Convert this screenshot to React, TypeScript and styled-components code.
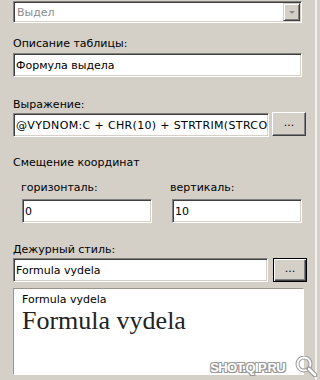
import React from "react";
import styled, { createGlobalStyle, css } from "styled-components";

const Global = createGlobalStyle`
  html, body { margin: 0; padding: 0; background: #d4d0c8; }
  body {
    font-family: "DejaVu Sans", Tahoma, Verdana, sans-serif;
    font-size: 11px;
    color: #000;
  }
`;

const sunken = css`
  box-sizing: border-box;
  border: 1px solid;
  border-color: #808080 #ffffff #ffffff #808080;
  box-shadow: inset 1px 1px 0 #404040, inset -1px -1px 0 #d4d0c8;
  background: #fff;
`;

const Page = styled.div`
  position: relative;
  width: 320px;
  height: 380px;
  overflow: hidden;
  background: #d4d0c8;
  display: flex;
`;

const Panel = styled.div`
  box-sizing: border-box;
  width: 317px;
  flex: none;
  border-right: 2px solid #f2f1ed;
  display: flex;
  flex-direction: column;
  padding: 1px 0 0 13px;
`;

const Combo = styled.div`
  ${sunken};
  width: 289px;
  height: 22px;
  display: flex;
  align-items: center;
  padding: 0 1px 0 3px;
  color: #8c8c8c;
  line-height: 13px;
`;

const ComboText = styled.span`
  flex: 1;
  white-space: nowrap;
`;

const DropButton = styled.div`
  box-sizing: border-box;
  width: 17px;
  height: 18px;
  background: #d4d0c8;
  border: 1px solid;
  border-color: #d4d0c8 #404040 #404040 #d4d0c8;
  box-shadow: inset 1px 1px 0 #ffffff, inset -1px -1px 0 #808080;
  display: flex;
  align-items: center;
  justify-content: center;
`;

const Arrow = styled.span`
  width: 0;
  height: 0;
  border-left: 3px solid transparent;
  border-right: 3px solid transparent;
  border-top: 3px solid #8c8c8c;
  margin-left: 1px;
`;

const Label = styled.div<{ $mt: number }>`
  margin-top: ${(p) => p.$mt}px;
  height: 13px;
  line-height: 13px;
  white-space: nowrap;
`;

const Field = styled.input<{ $w: number; $ml?: number; $mt?: number; $spacing?: number }>`
  ${sunken};
  width: ${(p) => p.$w}px;
  height: 24px;
  margin: ${(p) => p.$mt ?? 0}px 0 0 ${(p) => p.$ml ?? 0}px;
  padding: 0 1px 0 2px;
  font: inherit;
  letter-spacing: ${(p) => p.$spacing ?? 0}px;
  color: #000;
  outline: none;
  flex: none;
`;

const Row = styled.div<{ $mt: number; $gap: number }>`
  display: flex;
  align-items: flex-start;
  gap: ${(p) => p.$gap}px;
  margin-top: ${(p) => p.$mt}px;
`;

const DotsButton = styled.button<{ $default?: boolean }>`
  box-sizing: border-box;
  width: 34px;
  height: 24px;
  flex: none;
  padding: 0 0 3px 0;
  margin: 0;
  background: #d4d0c8;
  font: inherit;
  color: #000;
  line-height: 13px;
  ${(p) =>
    p.$default
      ? css`
          border: 1px solid #000;
          box-shadow: inset 1px 1px 0 #ffffff, inset -1px -1px 0 #404040,
            inset -2px -2px 0 #808080;
        `
      : css`
          border: 1px solid;
          border-color: #ffffff #404040 #404040 #ffffff;
          box-shadow: inset -1px -1px 0 #808080;
        `}
`;

const OffsetGrid = styled.div`
  display: grid;
  grid-template-columns: 131px 132px;
  column-gap: 18px;
  margin-top: 12px;
  padding-left: 8px;
`;

const OffsetCol = styled.div`
  display: flex;
  flex-direction: column;
  align-items: flex-start;
`;

const SubLabel = styled.div`
  height: 13px;
  line-height: 13px;
  white-space: nowrap;
`;

const Preview = styled.div`
  box-sizing: border-box;
  width: 291px;
  height: 87px;
  margin-top: 6px;
  background: #fff;
  border: 1px solid;
  border-color: #9a968e #ffffff #ffffff #9a968e;
  padding: 4px 0 0 8px;
`;

const SmallSample = styled.div`
  line-height: 13px;
  white-space: nowrap;
`;

const BigSample = styled.div`
  font-family: "Liberation Serif", "Times New Roman", serif;
  font-size: 26px;
  line-height: 30px;
  color: #222;
  white-space: nowrap;
`;

const Watermark = styled.div`
  position: absolute;
  right: 3px;
  bottom: 3px;
  display: flex;
  align-items: center;
  gap: 10px;
`;

const WatermarkText = styled.span`
  font-family: "Liberation Sans", Arial, sans-serif;
  font-weight: bold;
  font-size: 13px;
  letter-spacing: -0.6px;
  line-height: 14px;
  color: #fff;
  margin-top: 3px;
  text-shadow: 1px 0 0 #9a9a9a, -1px 0 0 #9a9a9a, 0 1px 0 #9a9a9a,
    0 -1px 0 #9a9a9a, 1px 1px 0 #8a8a8a, -1px -1px 0 #b0b0b0,
    1px -1px 0 #9a9a9a, -1px 1px 0 #9a9a9a;
`;

const LensIcon = () => (
  <svg width="22" height="21" viewBox="0 0 22 21" aria-hidden="true">
    <circle cx="9" cy="8" r="6.5" fill="none" stroke="#9a9a9a" strokeWidth="4" />
    <circle cx="9" cy="8" r="6.5" fill="none" stroke="#ffffff" strokeWidth="2" />
    <line x1="14" y1="13" x2="20" y2="19" stroke="#9a9a9a" strokeWidth="5" strokeLinecap="round" />
    <line x1="14" y1="13" x2="20" y2="19" stroke="#ffffff" strokeWidth="2.5" strokeLinecap="round" />
  </svg>
);

export default function App() {
  return (
    <>
      <Global />
      <Page>
        <Panel>
          <Combo>
            <ComboText>Выдел</ComboText>
            <DropButton>
              <Arrow />
            </DropButton>
          </Combo>

          <Label $mt={14}>Описание таблицы:</Label>
          <Field $w={289} $mt={3} readOnly value="Формула выдела" />

          <Label $mt={21}>Выражение:</Label>
          <Row $mt={1} $gap={3}>
            <Field
              $w={256}
              $mt={1}
              $spacing={0.35}
              readOnly
              value="@VYDNOM:C + CHR(10) + STRTRIM(STRCONV(NOM))"
            />
            <DotsButton>...</DotsButton>
          </Row>

          <Label $mt={19}>Смещение координат</Label>
          <OffsetGrid>
            <OffsetCol>
              <SubLabel>горизонталь:</SubLabel>
              <Field $w={130} $ml={1} $mt={5} readOnly value="0" />
            </OffsetCol>
            <OffsetCol>
              <SubLabel>вертикаль:</SubLabel>
              <Field $w={130} $ml={2} $mt={5} readOnly value="10" />
            </OffsetCol>
          </OffsetGrid>

          <Label $mt={20}>Дежурный стиль:</Label>
          <Row $mt={2} $gap={5}>
            <Field $w={255} readOnly value="Formula vydela" />
            <DotsButton $default>...</DotsButton>
          </Row>

          <Preview>
            <SmallSample>Formula vydela</SmallSample>
            <BigSample>Formula vydela</BigSample>
          </Preview>
        </Panel>
        <Watermark>
          <WatermarkText>SHOT.QIP.RU</WatermarkText>
          <LensIcon />
        </Watermark>
      </Page>
    </>
  );
}
